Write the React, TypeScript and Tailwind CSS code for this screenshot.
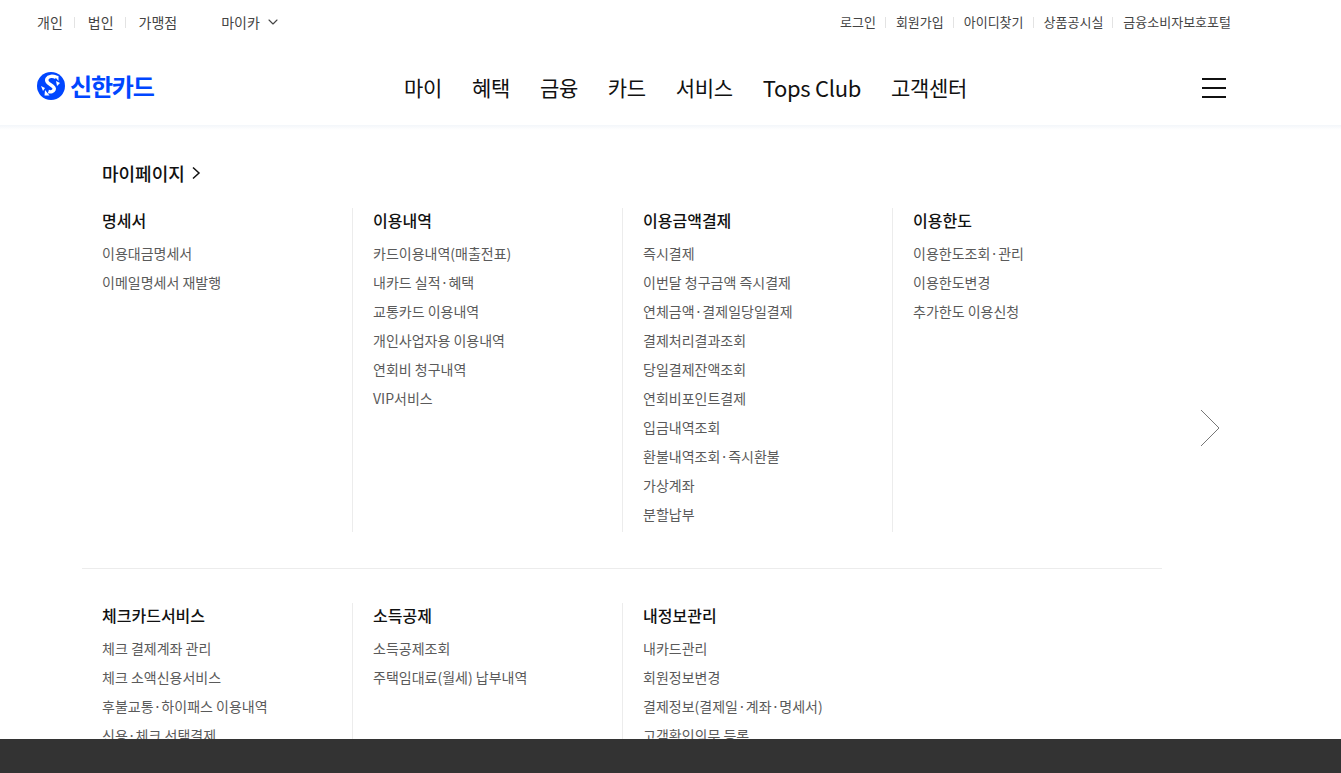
import { ChevronDown } from 'lucide-react';

const font = '[font-family:"Noto_Sans_CJK_KR","Noto_Sans",sans-serif]';

interface MenuColumn {
  title: string;
  items: string[];
}

const topLeft = ['개인', '법인', '가맹점'];
const topRight = ['로그인', '회원가입', '아이디찾기', '상품공시실', '금융소비자보호포털'];
const gnb = ['마이', '혜택', '금융', '카드', '서비스', 'Tops Club', '고객센터'];

const firstRow: MenuColumn[] = [
  { title: '명세서', items: ['이용대금명세서', '이메일명세서 재발행'] },
  {
    title: '이용내역',
    items: ['카드이용내역(매출전표)', '내카드 실적·혜택', '교통카드 이용내역', '개인사업자용 이용내역', '연회비 청구내역', 'VIP서비스'],
  },
  {
    title: '이용금액결제',
    items: [
      '즉시결제',
      '이번달 청구금액 즉시결제',
      '연체금액·결제일당일결제',
      '결제처리결과조회',
      '당일결제잔액조회',
      '연회비포인트결제',
      '입금내역조회',
      '환불내역조회·즉시환불',
      '가상계좌',
      '분할납부',
    ],
  },
  { title: '이용한도', items: ['이용한도조회·관리', '이용한도변경', '추가한도 이용신청'] },
];

const secondRow: MenuColumn[] = [
  { title: '체크카드서비스', items: ['체크 결제계좌 관리', '체크 소액신용서비스', '후불교통·하이패스 이용내역', '신용·체크 선택결제'] },
  { title: '소득공제', items: ['소득공제조회', '주택임대료(월세) 납부내역'] },
  { title: '내정보관리', items: ['내카드관리', '회원정보변경', '결제정보(결제일·계좌·명세서)', '고객확인의무 등록'] },
];

function TopLinks({ links, gap, sepGap, size }: { links: string[]; gap: string; sepGap: string; size: string }) {
  return (
    <ul className={`flex items-center ${gap}`}>
      {links.map((link, index) => (
        <li key={link} className="flex items-center">
          {index > 0 && <span className={`h-[11px] w-px bg-[#e3e3e3] ${sepGap}`} />}
          <span className={`${size} leading-[20px] text-[#444]`}>{link}</span>
        </li>
      ))}
    </ul>
  );
}

function MenuGrid({ columns }: { columns: MenuColumn[] }) {
  return (
    <div className="grid grid-cols-[270px_270px_270px_270px]">
      {columns.map((col, index) => (
        <div key={col.title} className={index > 0 ? 'border-l border-[#ececec] pb-[3px] pl-5' : 'pb-[3px] pl-5'}>
          <h3 className="text-[16px] leading-[25px] font-medium text-[#111]">{col.title}</h3>
          <ul className="mt-[6px]">
            {col.items.map((item) => (
              <li key={item} className="h-[29px] text-[14px] leading-[29px] whitespace-nowrap text-[#5a5a5a]">
                {item}
              </li>
            ))}
          </ul>
        </div>
      ))}
    </div>
  );
}

export default function App() {
  return (
    <div className={`h-[773px] overflow-hidden bg-white ${font}`}>
      <header className="h-[125px]">
        <div className="flex h-[44px] items-center justify-between pr-[110px] pl-[37px]">
          <div className="flex items-center">
            <TopLinks links={topLeft} gap="gap-[11px]" sepGap="mr-[13px]" size="text-[14px]" />
            <div className="ml-[44px] flex items-center gap-[5px] text-[14px] leading-[20px] text-[#444]">
              마이카
              <ChevronDown size={16} strokeWidth={1.7} />
            </div>
          </div>
          <TopLinks links={topRight} gap="gap-[9px]" sepGap="mr-[10px]" size="text-[13px]" />
        </div>
        <div className="mt-[5px] flex h-[76px] items-center pr-[115px] pl-[37px]">
          <div className="-mt-[2px] flex w-[118px] items-center gap-[5px]">
            <svg width="28" height="28" viewBox="0 0 28 28" className="shrink-0">
              <circle cx="14" cy="14" r="14" fill="#0046ff" />
              <path
                d="M19 5.500c-3-1.800-7.600-1.600-9 1.200-1.300 2.700 1.200 4.600 3.600 6 2.300 1.400 4.400 2.700 3.500 5-.7 1.800-3.200 2.600-5.700 1.800"
                fill="none"
                stroke="#fff"
                strokeWidth="3.500"
              />
              <path d="M16.500 3l5 1 0 5zM8 18l4.500 5.500-5 0z" fill="#fff" />
              <path d="M19 9l4 2-3 3zM4 14l4 2-2 3z" fill="#fff" />
            </svg>
            <span className="text-[24px] leading-none font-bold tracking-[-1.200px] whitespace-nowrap text-[#0046ff]">신한카드</span>
          </div>
          <nav className="-mt-[1px] ml-[249px] flex items-center gap-[30px]">
            {gnb.map((item) => (
              <span
                key={item}
                className={
                  item === 'Tops Club'
                    ? 'text-[22px] leading-[30px] tracking-[-0.300px] whitespace-nowrap text-[#111]'
                    : 'text-[21px] leading-[30px] tracking-[-0.350px] whitespace-nowrap text-[#111]'
                }
              >
                {item}
              </span>
            ))}
          </nav>
          <div className="mt-[1px] ml-auto flex h-[20px] w-[24px] flex-col justify-between">
            <span className="h-[2px] bg-[#111]" />
            <span className="h-[2px] bg-[#111]" />
            <span className="h-[2px] bg-[#111]" />
          </div>
        </div>
      </header>

      <div className="h-[5px] bg-gradient-to-b from-[#f3f6fa] to-white" />

      <main className="ml-[82px] w-[1080px]">
        <div className="flex h-[78px] items-center gap-[6px] pt-[8px] pl-5">
          <h2 className="text-[18px] leading-[26px] font-medium text-[#111]">마이페이지</h2>
          <svg width="10" height="14" viewBox="0 0 10 14" fill="none" stroke="#111" strokeWidth="1.5">
            <path d="M2 1.500l6 5.500-6 5.500" />
          </svg>
        </div>
        <MenuGrid columns={firstRow} />
        <div className="mt-[36px] mb-[34px] h-px bg-[#ececec]" />
        <MenuGrid columns={secondRow} />
      </main>

      <svg
        width="20"
        height="38"
        viewBox="0 0 20 38"
        fill="none"
        stroke="#777"
        className="absolute top-[409px] left-[1200px]"
      >
        <path d="M1 1l18 18L1 37" />
      </svg>

      <div className="fixed right-0 bottom-0 left-0 h-[34px] bg-[#333]" />
    </div>
  );
}
